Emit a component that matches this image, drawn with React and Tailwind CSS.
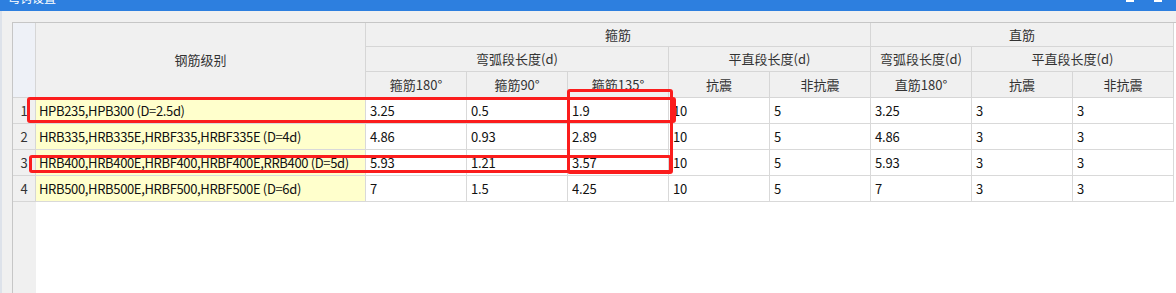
const rows = [
  { no: 1, name: 'HPB235,HPB300 (D=2.5d)', v: ['3.25', '0.5', '1.9', '10', '5', '3.25', '3', '3'] },
  { no: 2, name: 'HRB335,HRB335E,HRBF335,HRBF335E (D=4d)', v: ['4.86', '0.93', '2.89', '10', '5', '4.86', '3', '3'] },
  { no: 3, name: 'HRB400,HRB400E,HRBF400,HRBF400E,RRB400 (D=5d)', v: ['5.93', '1.21', '3.57', '10', '5', '5.93', '3', '3'] },
  { no: 4, name: 'HRB500,HRB500E,HRBF500,HRBF500E (D=6d)', v: ['7', '1.5', '4.25', '10', '5', '7', '3', '3'] },
];

const subHeads = ['箍筋180°', '箍筋90°', '箍筋135°', '抗震', '非抗震', '直筋180°', '抗震', '非抗震'];

const hd = 'flex items-center justify-center border-r border-b border-[#d6d6d6] bg-[#f0f0f0] text-[#333]';
const cell = 'flex items-center border-r border-b border-[#d9d9d9] bg-white pl-[4px] text-[#111] tracking-[-0.2px]';

const Box = ({ className }) => (
  <div className={`pointer-events-none absolute rounded-[3px] border-[3px] border-[#fb1d1d] ${className}`} />
);

export default function App() {
  return (
    <div
      className="relative h-[293px] w-[1176px] overflow-hidden bg-[#f0f0f0] text-[13px]"
      style={{ fontFamily: '"Noto Sans CJK SC", "Noto Sans", sans-serif' }}
    >
      {/* title bar, mostly scrolled off the top */}
      <div className="flex h-[11px] items-start overflow-hidden bg-[#2d7fdf]">
        <span className="ml-[8px] mt-[-8px] text-[12px] leading-[12px] text-white">弯钩设置</span>
        <div className="ml-auto mr-[14px] flex gap-[20px]">
          <div className="h-[2px] w-[8px] bg-white" />
          <div className="h-[2px] w-[8px] bg-white" />
        </div>
      </div>

      <div className="flex h-[282px] border-l-2 border-[#dde2ea] pl-[10px] pt-[11px]">
        <div className="flex w-[1166px] flex-col border-l border-t border-[#c6c6c6] bg-white">
          <div className="grid grid-cols-[23px_330px_repeat(8,101px)] grid-rows-[24px_25px_26px_repeat(4,26px)]">
            <div className="row-span-3 border-r border-b border-[#d6d6d6] bg-[#eef1f7]" />
            <div className={`${hd} row-span-3`}>钢筋级别</div>
            <div className={`${hd} col-span-5`}>箍筋</div>
            <div className={`${hd} col-span-3`}>直筋</div>
            <div className={`${hd} col-span-3`}>弯弧段长度(d)</div>
            <div className={`${hd} col-span-2`}>平直段长度(d)</div>
            <div className={hd}>弯弧段长度(d)</div>
            <div className={`${hd} col-span-2`}>平直段长度(d)</div>
            {subHeads.map((h, i) => (
              <div key={i} className={hd}>{h}</div>
            ))}

            {rows.map((r) => (
              <div key={r.no} className="contents">
                <div className="flex items-center justify-center border-r border-b border-[#d6d6d6] bg-[#f0f0f0] text-[#333]">
                  {r.no}
                </div>
                <div className="flex items-center border-r border-b border-[#d9d9d9] bg-[#ffffcc] pl-[3px] text-[#111] tracking-[-0.35px]">
                  {r.name}
                </div>
                {r.v.map((x, i) => (
                  <div key={i} className={cell}>{x}</div>
                ))}
              </div>
            ))}
          </div>
          <div className="flex flex-1">
            <div className="w-[23px] bg-[#f0f0f0]" />
          </div>
        </div>
      </div>

      {/* red annotation boxes */}
      <Box className="left-[27px] top-[97px] h-[26px] w-[649px]" />
      <Box className="left-[29px] top-[155px] h-[18px] w-[643px]" />
      <Box className="left-[567px] top-[89px] h-[85px] w-[106px]" />
    </div>
  );
}
